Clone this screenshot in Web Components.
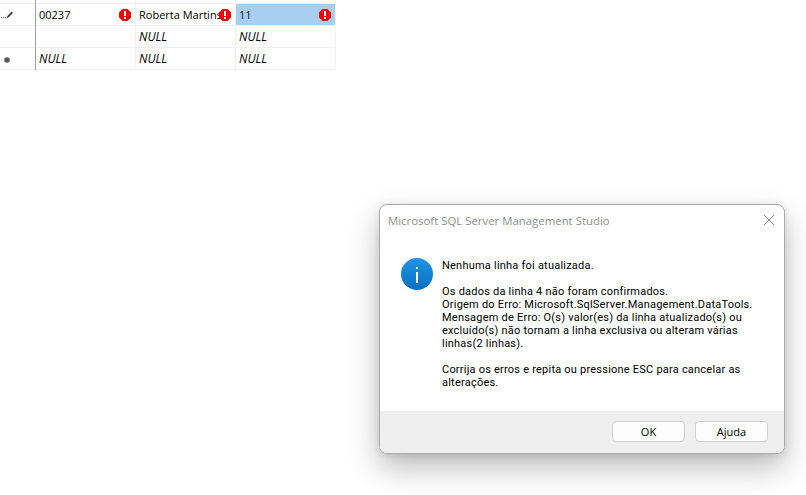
<!DOCTYPE html>
<html>
<head>
<meta charset="utf-8">
<title>Microsoft SQL Server Management Studio</title>
<style>
  html, body { margin: 0; height: 100%; background: #fff; overflow: hidden; }
  body { font: 11px "Open Sans", "Noto Sans", sans-serif; color: #000; }
</style>
</head>
<body>
<result-grid>
  <grid-row stub><grid-cell></grid-cell><grid-cell></grid-cell><grid-cell></grid-cell></grid-row>
  <grid-row marker="pencil">
    <grid-cell error>00237</grid-cell>
    <grid-cell error>Roberta Martins</grid-cell>
    <grid-cell error selected>11</grid-cell>
  </grid-row>
  <grid-row>
    <grid-cell></grid-cell>
    <grid-cell null>NULL</grid-cell>
    <grid-cell null>NULL</grid-cell>
  </grid-row>
  <grid-row marker="new">
    <grid-cell null>NULL</grid-cell>
    <grid-cell null>NULL</grid-cell>
    <grid-cell null>NULL</grid-cell>
  </grid-row>
</result-grid>

<message-box caption="Microsoft SQL Server Management Studio">
  <p>Nenhuma linha foi atualizada.</p>
  <p>Os dados da linha 4 não foram confirmados.<br>
  Origem do Erro: Microsoft.SqlServer.Management.DataTools.<br>
  Mensagem de Erro: O(s) valor(es) da linha atualizado(s) ou<br>
  excluído(s) não tornam a linha exclusiva ou alteram várias<br>
  linhas(2 linhas).</p>
  <p>Corrija os erros e repita ou pressione ESC para cancelar as<br>
  alterações.</p>
  <dialog-button slot="buttons">OK</dialog-button>
  <dialog-button slot="buttons">Ajuda</dialog-button>
</message-box>

<script>
const gridTemplate = document.createElement("template");
gridTemplate.innerHTML = `
  <style>
    :host { display: block; width: 336px; }
  </style>
  <slot></slot>
`;

class ResultGrid extends HTMLElement {
  constructor() {
    super();
    this.attachShadow({ mode: "open" }).appendChild(gridTemplate.content.cloneNode(true));
  }
}

const markers = {
  pencil: `<svg width="12" height="8" viewBox="0 0 12 8" style="margin: 1px 0 0 1px">
      <path d="M0 6.5h1M2 6.5h1M4 6.5h1" stroke="#555"/>
      <path d="M5.5 7.5 6.5 5 10.5.5l1.5 1.3L8 6z" fill="#3c3c3c"/>
    </svg>`,
  new: `<svg width="6" height="6" viewBox="0 0 6 6" style="margin: 2px 0 0 4px"><circle cx="3" cy="3" r="2.8" fill="#585858"/></svg>`
};

const rowTemplate = document.createElement("template");
rowTemplate.innerHTML = `
  <style>
    :host { display: grid; grid-template-columns: 35px 1px 1fr; height: 22px; }
    :host([stub]) { height: 4px; }
    .marker { display: flex; align-items: center; justify-content: flex-start; border-bottom: 1px solid #f0f0f0; }
    .rule { background: #a0a0a0; }
    .cells { display: grid; grid-template-columns: repeat(3, 100px); height: 100%; min-height: 0; }
  </style>
  <div class="marker"></div>
  <div class="rule"></div>
  <div class="cells"><slot></slot></div>
`;

class GridRow extends HTMLElement {
  constructor() {
    super();
    const root = this.attachShadow({ mode: "open" });
    root.appendChild(rowTemplate.content.cloneNode(true));
    root.querySelector(".marker").innerHTML = markers[this.getAttribute("marker")] || "";
  }
}

const cellTemplate = document.createElement("template");
cellTemplate.innerHTML = `
  <style>
    :host { display: block; box-sizing: border-box; border-right: 1px solid #f0f0f0; border-bottom: 1px solid #f0f0f0; position: relative; min-width: 0; min-height: 0; overflow: hidden; }
    .box { height: 100%; }
    .text { display: block; padding: 0 3px; line-height: 21px; white-space: nowrap; overflow: hidden; color: #000; }
    :host([null]) .text { font-style: italic; font-size: 12px; }
    :host([selected]) .box { background: #a6cff1; }
    :host([selected]) .text { color: #1c0040; }
    svg { position: absolute; right: 4px; top: 5px; display: none; }
    :host([error]) svg { display: block; }
  </style>
  <div class="box"><span class="text"><slot></slot></span></div>
  <svg width="12" height="12" viewBox="0 0 12 12">
    <path d="M3.6 0h4.8L12 3.6v4.8L8.4 12H3.6L0 8.4V3.6z" fill="#f40000"/>
    <rect x="5" y="2" width="2" height="5" fill="#fff"/>
    <rect x="5" y="8" width="2" height="2" fill="#fff"/>
  </svg>
`;

class GridCell extends HTMLElement {
  constructor() {
    super();
    this.attachShadow({ mode: "open" }).appendChild(cellTemplate.content.cloneNode(true));
  }
}

const boxTemplate = document.createElement("template");
boxTemplate.innerHTML = `
  <style>
    :host {
      position: absolute; left: 379px; top: 204px; width: 406px; height: 250px;
      display: flex; flex-direction: column; box-sizing: border-box;
      border: 1px solid #aaa; border-radius: 8px; background: #fff;
      box-shadow: 0 14px 30px rgba(0,0,0,.26), 0 2px 8px rgba(0,0,0,.1); overflow: hidden;
    }
    .title { display: flex; justify-content: space-between; align-items: center; height: 30px; padding: 0 9px 0 8px; color: #8f8f8f; font-size: 11.4px; flex: none; }
    .title svg { display: block; }
    .body { flex: 1; display: flex; gap: 9px; padding: 23px 0 0 21px; min-height: 0; }
    .icon { flex: none; width: 32px; height: 32px; }
    .msg { font: 11px/13px Roboto, "Open Sans", sans-serif; letter-spacing: .22px; color: #000; padding-top: 1px; }
    ::slotted(p) { margin: 0 0 13px; }
    .foot { flex: none; height: 42px; background: #efefef; display: flex; justify-content: flex-end; align-items: flex-start; gap: 10px; padding: 10px 16px 0 0; box-sizing: border-box; }
  </style>
  <div class="title">
    <span class="caption"></span>
    <svg width="12" height="12" viewBox="0 0 12 12"><path d="M1 1l10 10M11 1 1 11" stroke="#8a8a8a" stroke-width="1" fill="none"/></svg>
  </div>
  <div class="body">
    <svg class="icon" viewBox="0 0 32 32">
      <defs><linearGradient id="blue" x1="0" y1="0" x2="0" y2="1"><stop offset="0" stop-color="#1f95e4"/><stop offset="1" stop-color="#0b6ec0"/></linearGradient></defs>
      <circle cx="16" cy="16" r="16" fill="url(#blue)"/>
      <rect x="15" y="9" width="2" height="2" fill="#fff"/>
      <rect x="15" y="14" width="2" height="11" fill="#fff"/>
    </svg>
    <div class="msg"><slot></slot></div>
  </div>
  <div class="foot"><slot name="buttons"></slot></div>
`;

class MessageBox extends HTMLElement {
  constructor() {
    super();
    const root = this.attachShadow({ mode: "open" });
    root.appendChild(boxTemplate.content.cloneNode(true));
    root.querySelector(".caption").textContent = this.getAttribute("caption");
  }
}

const buttonTemplate = document.createElement("template");
buttonTemplate.innerHTML = `
  <style>
    :host { display: flex; align-items: center; justify-content: center; width: 73px; height: 21px; box-sizing: border-box; background: #fdfdfd; border: 1px solid #d0d0d0; border-radius: 4px; font-size: 11px; color: #000; }
  </style>
  <slot></slot>
`;

class DialogButton extends HTMLElement {
  constructor() {
    super();
    this.attachShadow({ mode: "open" }).appendChild(buttonTemplate.content.cloneNode(true));
  }
}

customElements.define("result-grid", ResultGrid);
customElements.define("grid-row", GridRow);
customElements.define("grid-cell", GridCell);
customElements.define("message-box", MessageBox);
customElements.define("dialog-button", DialogButton);
</script>
</body>
</html>
